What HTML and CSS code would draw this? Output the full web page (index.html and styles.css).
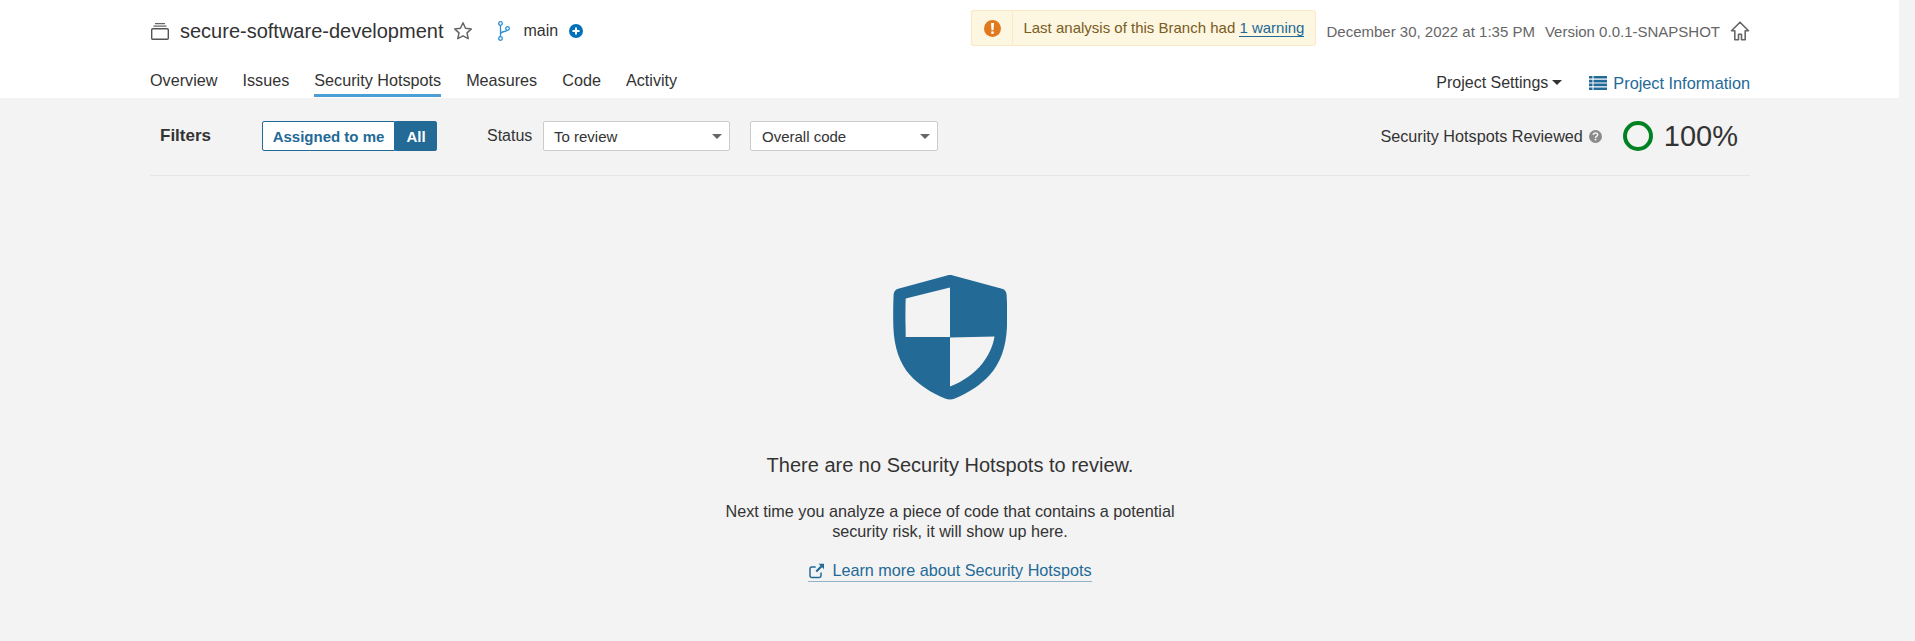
FILE: index.html
```html
<!DOCTYPE html>
<html lang="en">
<head>
    <meta charset="UTF-8">
    <title>Security Hotspots</title>
    <link rel="stylesheet" href="styles.css">
</head>
<body>

<!-- Project header -->
<header class="project-nav">
    <div class="project-inner">
        <div class="top-row">
            <div class="crumbs">
                <svg class="project-icon" width="18" height="17" viewBox="0 0 18 17"><path d="M4 .7h10M2.500 3.200h13" fill="none" stroke="#666" stroke-width="1.200"/><rect x=".7" y="5.700" width="16.600" height="10.600" rx="1" fill="none" stroke="#555" stroke-width="1.400"/></svg>
                <span class="project-name">secure-software-development</span>
                <svg class="star" width="20" height="20" viewBox="0 0 20 20"><path d="M10 1.800l2.500 5.400 5.900.7-4.400 4 1.200 5.800L10 14.800l-5.200 2.900L6 11.900l-4.400-4 5.900-.7z" fill="none" stroke="#666" stroke-width="1.500" stroke-linejoin="round"/></svg>
                <svg class="branch" width="13" height="20" viewBox="0 0 13 20"><g fill="none" stroke="#2a8fd0" stroke-width="1.300"><circle cx="3.500" cy="2.500" r="1.800"/><circle cx="3.500" cy="17.500" r="1.800"/><circle cx="10.500" cy="7.500" r="1.800"/><path d="M3.500 4.300v11.400M3.500 13c0-3 6-2 6.600-3.800"/></g></svg>
                <span class="branch-name">main</span>
                <svg class="plus" width="14" height="14" viewBox="0 0 14 14"><circle cx="7" cy="7" r="7" fill="#0271b9"/><path d="M3.500 7h7M7 3.500v7" stroke="#fff" stroke-width="2"/></svg>
            </div>
            <div class="meta">
                <div class="warning-box">
                    <span class="warning-icon"><svg width="17" height="17" viewBox="0 0 17 17"><circle cx="8.500" cy="8.500" r="8.500" fill="#e17a1e"/><path d="M7 3h3l-.5 7.200h-2z" fill="#fff"/><rect x="7.300" y="11.400" width="2.400" height="2.500" fill="#fff"/></svg></span>
                    <span class="warning-text">Last analysis of this Branch had <a href="#">1 warning</a></span>
                </div>
                <span class="meta-text date">December 30, 2022 at 1:35 PM</span>
                <span class="meta-text version">Version 0.0.1-SNAPSHOT</span>
                <svg class="home" width="20" height="20" viewBox="0 0 20 20"><path d="M10 1.200L1.500 9.800h3.300v9h3.700v-5.500h3v5.500h3.700v-9h3.300z" fill="none" stroke="#666" stroke-width="1.600" stroke-linejoin="round"/></svg>
            </div>
        </div>
        <div class="bottom-row">
            <nav class="tabs">
                <a href="#">Overview</a>
                <a href="#">Issues</a>
                <a href="#" class="active">Security Hotspots</a>
                <a href="#">Measures</a>
                <a href="#">Code</a>
                <a href="#">Activity</a>
            </nav>
            <div class="project-links">
                <span class="settings">Project Settings<i class="caret-dark"></i></span>
                <a href="#" class="info">
                    <svg width="18" height="14" viewBox="0 0 18 14"><path fill="#236a97" d="M0 0h3.500v2.600H0zM4.500 0H18v2.600H4.500zM0 3.800h3.500v2.600H0zM4.500 3.800H18v2.600H4.500zM0 7.600h3.500v2.600H0zM4.500 7.600H18v2.600H4.500zM0 11.400h3.500V14H0zM4.500 11.400H18V14H4.500z"/></svg>
                    Project Information
                </a>
            </div>
        </div>
    </div>
</header>

<main class="content">
    <!-- Filters -->
    <div class="filter-bar">
        <strong class="filter-title">Filters</strong>
        <div class="toggle">
            <span class="toggle-item">Assigned to me</span>
            <span class="toggle-item selected">All</span>
        </div>
        <label class="status-label">Status</label>
        <div class="select select-status">To review<i class="caret"></i></div>
        <div class="select select-scope">Overall code<i class="caret"></i></div>
        <div class="reviewed">
            <span class="reviewed-label">Security Hotspots Reviewed</span>
            <svg class="help" width="13" height="13" viewBox="0 0 12 12"><circle cx="6" cy="6" r="6" fill="#8a8a8a"/><path d="M4 4.600C4 3.400 4.900 2.700 6 2.700s2 .7 2 1.700c0 1.500-2 1.400-2 2.900" fill="none" stroke="#f3f3f3" stroke-width="1.400"/><rect x="5.200" y="8.100" width="1.600" height="1.500" fill="#f3f3f3"/></svg>
            <span class="ring"></span>
            <span class="percent">100%</span>
        </div>
    </div>

    <!-- Empty state -->
    <div class="empty">
        <svg class="shield" width="114" height="126" viewBox="0 0 114 126"><path fill-rule="evenodd" fill="#236a97" d="M57 1c1 0 2 .1 3 .4l49 13.300c3 .8 4.500 3 4.600 6 .6 9 .7 21 .3 33-.8 20-7 36-17 47-9 10-21 18-35 23.800-3.300 1.300-6.600 1.300-9.900 0C38 118.700 26 111 17 101 7 90 1.300 74 .4 54 0 42 .2 30 .6 20.700c.1-3 1.700-5.200 4.600-6L54 1.400c1-.3 2-.4 3-.4zM57 13.500L12.700 24.500c-.3 9-.4 19-.1 28.700l.1 9.800H57zM57 63.500V112.500C70 107.500 82 99 89 90c6.500-8.500 11-17.500 12.500-27.500z"/></svg>
        <h2 class="empty-title">There are no Security Hotspots to review.</h2>
        <p class="empty-text">Next time you analyze a piece of code that contains a potential<br>security risk, it will show up here.</p>
        <a href="#" class="learn-more">
            <svg width="17" height="16" viewBox="0 0 16 16"><path d="M12.500 9.500v3.300c0 1-.7 1.700-1.700 1.700H3.200c-1 0-1.700-.7-1.700-1.700V5.600c0-1 .7-1.700 1.700-1.700h4" fill="none" stroke="#236a97" stroke-width="1.500"/><path fill="#236a97" d="M10 .8h5.500v5.500l-2-2-5 5-1.500-1.500 5-5z"/></svg>
            Learn more about Security Hotspots
        </a>
    </div>
</main>

</body>
</html>
```

FILE: styles.css
```css
html, body {
    margin: 0;
    padding: 0;
}

body {
    height: 641px;
    overflow: hidden;
    background-color: #f3f3f3;
    font-family: "Liberation Sans", Arial, sans-serif;
    font-size: 16.200px;
    color: #333;
}

a {
    text-decoration: none;
}

.project-nav {
    width: 1899px;
    height: 98px;
    background-color: #fff;
}

.project-inner {
    width: 1600px;
    height: 98px;
    margin-left: 150px;
    display: flex;
    flex-direction: column;
}

.top-row {
    display: flex;
    justify-content: space-between;
    align-items: center;
    height: 62px;
}

.crumbs {
    display: flex;
    align-items: center;
}

.project-icon {
    margin-left: 1px;
    margin-right: 11px;
}

.project-name {
    font-size: 20px;
}

.star {
    margin-left: 10px;
}

.branch {
    margin-left: 24px;
}

.branch-name {
    margin-left: 13px;
    font-size: 16px;
}

.plus {
    margin-left: 11px;
}

.meta {
    display: flex;
    align-items: center;
}

.warning-box {
    display: flex;
    height: 36px;
    margin-top: -6px;
    box-sizing: border-box;
    border: 1px solid #fbe9c6;
    border-radius: 2px;
    background-color: #fdf6e0;
    color: #7a5c24;
    font-size: 15px;
}

.warning-icon {
    display: flex;
    align-items: center;
    justify-content: center;
    width: 40px;
    border-right: 1px solid #fbe9c6;
}

.warning-text {
    padding: 0 11px 0 10px;
    line-height: 33px;
    white-space: nowrap;
}

.warning-text a {
    color: #236a97;
    border-bottom: 1px solid #236a97;
}

.meta-text {
    font-size: 15px;
    color: #666;
}

.date {
    margin-left: 10px;
}

.version {
    margin-left: 10px;
}

.home {
    margin-left: 10px;
}

.bottom-row {
    display: flex;
    justify-content: space-between;
    height: 36px;
}

.tabs {
    display: flex;
    gap: 25px;
}

.tabs a {
    height: 33px;
    padding-top: 9px;
    box-sizing: border-box;
    color: #333;
    font-size: 16.200px;
}

.tabs a.active {
    border-bottom: 3px solid #4b9fd5;
    height: 35px;
}

.project-links {
    display: flex;
    align-items: center;
    gap: 27px;
    padding-top: 6px;
}

.settings {
    font-size: 16px;
    color: #333;
}

.caret-dark {
    display: inline-block;
    margin-left: 4px;
    vertical-align: 3px;
    border-top: 5px solid #333;
    border-left: 5px solid transparent;
    border-right: 5px solid transparent;
}

.info {
    display: flex;
    align-items: center;
    gap: 6px;
    font-size: 16.300px;
    color: #236a97;
}

.content {
    width: 1600px;
    margin-left: 150px;
}

.filter-bar {
    display: flex;
    align-items: center;
    height: 76px;
    padding-bottom: 1px;
    border-bottom: 1px solid #e6e6e6;
}

.filter-title {
    width: 102px;
    margin-left: 10px;
    font-size: 17px;
}

.toggle {
    display: flex;
    height: 30px;
}

.toggle-item {
    display: flex;
    align-items: center;
    justify-content: center;
    box-sizing: border-box;
    width: 133px;
    border: 1px solid #236a97;
    background-color: #fff;
    color: #236a97;
    font-size: 15px;
    font-weight: bold;
    border-radius: 2px 0 0 2px;
}

.toggle-item.selected {
    width: 42px;
    background-color: #236a97;
    color: #fff;
    border-radius: 0 2px 2px 0;
}

.status-label {
    width: 46px;
    margin-left: 50px;
    font-size: 16px;
}

.select {
    position: relative;
    display: flex;
    align-items: center;
    box-sizing: border-box;
    height: 30px;
    padding-left: 10px;
    border: 1px solid #ccc;
    border-radius: 2px;
    background-color: #fff;
    font-size: 15px;
}

.select-status {
    width: 187px;
    margin-left: 10px;
}

.select-scope {
    width: 188px;
    margin-left: 20px;
    padding-left: 11px;
}

.caret {
    position: absolute;
    right: 7px;
    top: 12px;
    border-top: 5px solid #666;
    border-left: 5px solid transparent;
    border-right: 5px solid transparent;
}

.reviewed {
    display: flex;
    align-items: center;
    margin-left: auto;
    padding-right: 12px;
}

.help {
    margin-left: 6px;
}

.ring {
    width: 30px;
    height: 30px;
    box-sizing: border-box;
    margin-left: 21px;
    border: 4px solid #008223;
    border-radius: 50%;
}

.percent {
    margin-left: 11px;
    font-size: 29px;
}

.empty {
    display: flex;
    flex-direction: column;
    align-items: center;
    padding-top: 98px;
}

.empty-title {
    margin: 53px 0 0;
    font-size: 20px;
    font-weight: normal;
    line-height: 24px;
}

.empty-text {
    margin: 24px 0 0;
    font-size: 16.200px;
    line-height: 20px;
    text-align: center;
}

.learn-more {
    display: flex;
    align-items: center;
    gap: 7px;
    margin-top: 20px;
    padding-bottom: 1px;
    border-bottom: 1px solid #8fb3c9;
    color: #236a97;
    font-size: 16.200px;
}
```
